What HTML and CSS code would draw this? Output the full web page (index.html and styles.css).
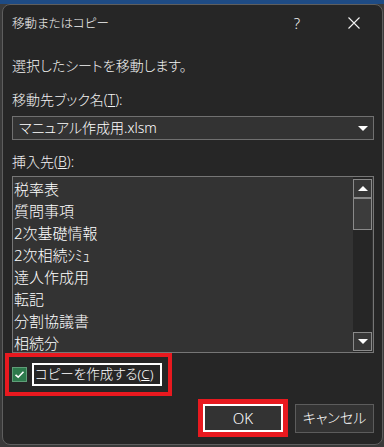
FILE: index.html
```html
<!DOCTYPE html>
<html lang="ja">
<head>
<meta charset="utf-8">
<link rel="stylesheet" href="styles.css">
</head>
<body>
<div class="dialog">
  <div class="titlebar">
    <span class="title">移動またはコピー</span>
    <span class="help">?</span>
    <span class="close"><svg width="12" height="12" viewBox="0 0 12 12"><path d="M0.5 0.5L11.5 11.5M11.5 0.5L0.5 11.5" stroke="#f2f2f2" stroke-width="1.1" fill="none"/></svg></span>
  </div>
  <div class="content">
    <div class="msg">選択したシートを移動します。</div>
    <div class="label l1">移動先ブック名(<u>T</u>):</div>
    <div class="combo">
      <span class="combo-text">マニュアル作成用.xlsm</span>
      <svg class="arrow" width="10" height="5" viewBox="0 0 10 5"><path d="M0 0H10L5 5Z" fill="#fff"/></svg>
    </div>
    <div class="label l2">挿入先(<u>B</u>):</div>
    <div class="list">
      <ul class="items">
        <li>税率表</li>
        <li>質問事項</li>
        <li>2次基礎情報</li>
        <li>2次相続ｼﾐｭ</li>
        <li>達人作成用</li>
        <li>転記</li>
        <li>分割協議書</li>
        <li>相続分</li>
      </ul>
      <div class="scrollbar">
        <div class="sbtn"><svg width="10" height="5" viewBox="0 0 10 5"><path d="M0 5H10L5 0Z" fill="#fff"/></svg></div>
        <div class="thumb"></div>
        <div class="track"></div>
        <div class="sbtn"><svg width="10" height="5" viewBox="0 0 10 5"><path d="M0 0H10L5 5Z" fill="#fff"/></svg></div>
      </div>
    </div>
  </div>
  <div class="checkrow">
    <div class="chk"><svg width="13" height="13" viewBox="0 0 13 13"><path d="M2.5 6.8L5.2 9.2L10.5 3.8" stroke="#fff" stroke-width="1.6" fill="none"/></svg></div>
    <div class="focus">コピーを作成する(<u>C</u>)</div>
  </div>
  <div class="buttons">
    <div class="okring"><div class="btn ok">OK</div></div>
    <div class="btn cancel">キャンセル</div>
  </div>
</div>
</body>
</html>
```
FILE: styles.css
```css
html, body {
  margin: 0;
  padding: 0;
}
body {
  width: 384px;
  height: 447px;
  overflow: hidden;
  background: linear-gradient(#1e4b84 0, #1e4b84 4px, #3a3a3a 4px);
  font-family: "Noto Sans", "Noto Sans CJK JP", sans-serif;
  font-feature-settings: "palt";
  font-weight: 300;
  color: #f3f3f3;
  font-size: 14px;
}
.dialog {
  margin: 4px 0 0 2px;
  width: 381px;
  height: 441px;
  box-sizing: border-box;
  border: 1px solid #5e5e5e;
  border-radius: 8px;
  background: #262626;
  overflow: hidden;
}
.titlebar {
  height: 38px;
  display: flex;
  align-items: center;
  padding-left: 9px;
  padding-right: 5px;
}
.title {
  flex: 1;
  font-size: 12.5px;
  line-height: 20px;
}
.help {
  width: 46px;
  margin-right: 11px;
  text-align: center;
  font-weight: 300;
  font-size: 15px;
  line-height: 20px;
  margin-top: -2px;
}
.close {
  width: 46px;
  display: flex;
  justify-content: center;
  margin-top: -2px;
}
.content {
  margin-left: 9px;
  width: 362px;
}
.msg {
  margin-top: 13px;
  line-height: 20px;
}
.label {
  line-height: 20px;
}
.l1 { margin-top: 14px; }
.l2 { margin-top: 12px; }
.combo {
  margin-top: 6px;
  height: 24px;
  box-sizing: border-box;
  border: 1px solid #707070;
  background: #333333;
  display: flex;
  align-items: center;
  padding-left: 6px;
  padding-right: 5px;
}
.combo-text {
  flex: 1;
  line-height: 20px;
  color: #fff;
}
.arrow { display: block; }
.list {
  margin-top: 4px;
  height: 177px;
  box-sizing: border-box;
  border: 1px solid #767676;
  background: #333333;
  display: flex;
}
.items {
  flex: 1;
  list-style: none;
  margin: 0;
  padding: 1px 0 0 1px;
  overflow: hidden;
  font-size: 15px;
}
.items li {
  height: 22px;
  line-height: 22px;
  color: #fff;
  white-space: nowrap;
}
.scrollbar {
  width: 19px;
  margin-right: 1px;
  padding-top: 2px;
  padding-bottom: 1px;
  display: flex;
  flex-direction: column;
  background: #262626;
}
.sbtn {
  height: 19px;
  box-sizing: border-box;
  border: 1px solid #8a8a8a;
  background: #383838;
  display: flex;
  align-items: center;
  justify-content: center;
}
.sbtn svg { display: block; }
.thumb {
  height: 32px;
  box-sizing: border-box;
  border: 1px solid #8a8a8a;
  background: #3c3c3c;
}
.track { flex: 1; }
.checkrow {
  margin-left: 2px;
  width: 167px;
  height: 43px;
  box-sizing: border-box;
  border: 4px solid #e8191f;
  display: flex;
  align-items: center;
  padding-left: 3px;
  padding-bottom: 1px;
}
.chk {
  width: 15px;
  height: 15px;
  box-sizing: border-box;
  border: 1px solid #5f9e78;
  background: #2d7a4c;
  display: flex;
  align-items: center;
  justify-content: center;
}
.chk svg { display: block; }
.focus {
  margin-left: 5px;
  width: 130px;
  height: 23px;
  box-sizing: border-box;
  border: 2px solid #ffffff;
  padding-left: 1px;
  font-size: 13.5px;
  line-height: 19px;
  color: #fff;
  white-space: nowrap;
}
.buttons {
  margin-top: 3px;
  display: flex;
  justify-content: flex-end;
  align-items: center;
  gap: 7px;
  padding-right: 8px;
}
.okring {
  width: 90px;
  height: 38px;
  box-sizing: border-box;
  border: 5px solid #e8191f;
  display: flex;
}
.btn {
  box-sizing: border-box;
  background: #333333;
  color: #fff;
  display: flex;
  align-items: center;
  justify-content: center;
  line-height: 20px;
}
.ok {
  flex: 1;
  border: 2px solid #ffffff;
  font-size: 15px;
  font-weight: 300;
}
.cancel {
  width: 79px;
  height: 29px;
  border: 1px solid #5c5c5c;
}
```
